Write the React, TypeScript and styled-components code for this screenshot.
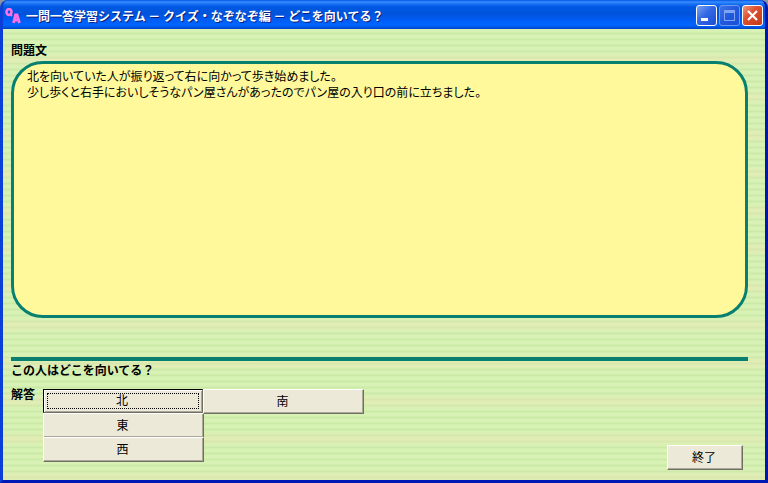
import React from 'react';
import styled, { createGlobalStyle, css } from 'styled-components';

const GlobalStyle = createGlobalStyle`
  *, *::before, *::after { box-sizing: border-box; }
  body {
    margin: 0;
    background: #8a93a0;
    color: #000;
    font: 12px/16px "Noto Sans CJK JP", sans-serif;
  }
`;

const Window = styled.div`
  display: flex;
  flex-direction: column;
  min-height: 100vh;
  border: solid;
  border-width: 0 3px 3px;
  border-color: #0a3fd8 #0018a8 #0018b4 #0a3fd8;
  border-radius: 8px 8px 0 0;
  background: #0054e3;
  overflow: hidden;
`;

const TitleBar = styled.header`
  display: flex;
  align-items: center;
  gap: 5px;
  height: 29px;
  margin: 0 -3px;
  padding: 2px 5px 0;
  background: linear-gradient(
    #0058e6 0, #3a8cff 2px, #1570f4 4px, #0058e0 7px, #0054dc 14px,
    #005cf4 20px, #0066ff 25px, #0058e8 27px, #0040c4 29px
  );
`;

const TitleText = styled.h1`
  flex: 1;
  margin: 0;
  font-size: 12px;
  line-height: 16px;
  color: #fff;
  text-shadow: 1px 1px #0a1e82;
  white-space: nowrap;
`;

const Controls = styled.div`
  display: flex;
  gap: 2px;
`;

const ControlButton = styled.button<{ $kind: 'normal' | 'disabled' | 'close' }>`
  display: grid;
  place-items: center;
  width: 21px;
  height: 21px;
  padding: 0;
  border: 1px solid ${p => (p.$kind === 'disabled' ? '#6c98f0' : '#fff')};
  border-radius: 3px;
  background: ${p =>
    p.$kind === 'close'
      ? 'linear-gradient(135deg, #ee9a80, #dd5030 40%, #c43a18)'
      : p.$kind === 'disabled'
        ? 'linear-gradient(135deg, #3d74e8, #2258dc 50%, #1c50d8)'
        : 'linear-gradient(135deg, #7ba2f4, #3268e4 45%, #1c4fd4)'};
`;

const Client = styled.main`
  flex: 1;
  display: flex;
  flex-direction: column;
  padding: 13px 17px 10px 8px;
  background:
    repeating-linear-gradient(rgba(246, 226, 184, 0) 0 22px, rgba(246, 226, 184, 0.3) 28px 32px, rgba(246, 226, 184, 0) 38px),
    repeating-linear-gradient(#d7f2b4 0 3px, #cbeaa8 4px 5px, #d7f2b4 6px);
`;

const Heading = styled.h2`
  margin: 0;
  font-size: 12px;
  line-height: 16px;
`;

const QuestionBox = styled.section`
  min-height: 257px;
  margin-top: 3px;
  padding: 4px 13px;
  border: 3px solid #088070;
  border-radius: 32px;
  background: #fff99c;
`;

const Line = styled.p`
  margin: 0;
  font-feature-settings: "palt";
`;

const Divider = styled.hr`
  width: 100%;
  height: 4px;
  margin: 39px 0 1px;
  border: 0;
  background: #088070;
`;

const AnswerRow = styled.div`
  display: flex;
  flex: 1;
  gap: 7px;
  margin-top: 8px;
`;

const AnswerLabel = styled(Heading)`
  width: 25px;
  white-space: nowrap;
`;

const Choices = styled.div`
  display: grid;
  grid-template-columns: repeat(2, minmax(0, 160px));
  grid-auto-rows: 24px;
  flex: 1;
  margin-top: 3px;
`;

const PushButton = styled.button`
  padding: 0 2px 2px 0;
  border: 1px solid;
  border-color: #fff #716f64 #716f64 #fff;
  box-shadow: inset -1px -1px #aca899;
  font: inherit;
  color: #000;
  background: #ece9d8;
`;

const ChoiceButton = styled(PushButton)<{ $selected: boolean; $column: number }>`
  grid-column: ${p => p.$column};
  margin: 0 -1px -1px 0;
  ${p =>
    p.$selected &&
    css`
      margin: 0;
      border-color: #000 #716f64 #716f64 #000;
      box-shadow: inset 1px 1px #fff, inset -1px -1px #aca899;
      outline: 1px dotted #000;
      outline-offset: -5px;
    `}
`;

const ExitButton = styled(PushButton)`
  align-self: flex-end;
  width: 76px;
  height: 25px;
  margin-right: 5px;
`;

const LINES = [
  '北を向いていた人が振り返って右に向かって歩き始めました。',
  '少し歩くと右手においしそうなパン屋さんがあったのでパン屋の入り口の前に立ちました。',
];

const CHOICES = [
  { label: '北', column: 1 },
  { label: '南', column: 2 },
  { label: '東', column: 1 },
  { label: '西', column: 1 },
];

function AppIcon() {
  return (
    <svg width="16" height="16" viewBox="0 0 16 16" fill="none" stroke="#ff70e8" aria-hidden="true">
      <ellipse cx="4" cy="4" rx="2.500" ry="3" strokeWidth="2.600" />
      <path d="M4.500 5.500l2.500 2.500" strokeWidth="2" />
      <path d="M8.500 15l2-8h1.500l2.500 8M9.500 12h4.500" strokeWidth="2.800" />
    </svg>
  );
}

export default function App() {
  const [selected, setSelected] = React.useState('北');
  return (
    <>
      <GlobalStyle />
      <Window>
        <TitleBar>
          <AppIcon />
          <TitleText>一問一答学習システム － クイズ・なぞなぞ編 － どこを向いてる？</TitleText>
          <Controls>
            <ControlButton $kind="normal" aria-label="最小化">
              <svg width="19" height="19" viewBox="0 0 19 19">
                <path d="M4 12h7v3H4z" fill="#fff" />
              </svg>
            </ControlButton>
            <ControlButton $kind="disabled" aria-label="最大化" disabled>
              <svg width="19" height="19" viewBox="0 0 19 19">
                <path d="M4 4h11v11H4zM5 7v7h9V7z" fill="#7ea4f2" fillRule="evenodd" />
              </svg>
            </ControlButton>
            <ControlButton $kind="close" aria-label="閉じる">
              <svg width="19" height="19" viewBox="0 0 19 19">
                <path d="M5 5l9 9M14 5l-9 9" stroke="#fff" strokeWidth="2.200" />
              </svg>
            </ControlButton>
          </Controls>
        </TitleBar>
        <Client>
          <Heading>問題文</Heading>
          <QuestionBox>
            {LINES.map(line => (
              <Line key={line}>{line}</Line>
            ))}
          </QuestionBox>
          <Divider />
          <Heading>この人はどこを向いてる？</Heading>
          <AnswerRow>
            <AnswerLabel id="answer-label">解答</AnswerLabel>
            <Choices role="group" aria-labelledby="answer-label">
              {CHOICES.map(({ label, column }) => (
                <ChoiceButton
                  key={label}
                  type="button"
                  $column={column}
                  $selected={selected === label}
                  aria-pressed={selected === label}
                  onClick={() => setSelected(label)}
                >
                  {label}
                </ChoiceButton>
              ))}
            </Choices>
            <ExitButton type="button">終了</ExitButton>
          </AnswerRow>
        </Client>
      </Window>
    </>
  );
}
